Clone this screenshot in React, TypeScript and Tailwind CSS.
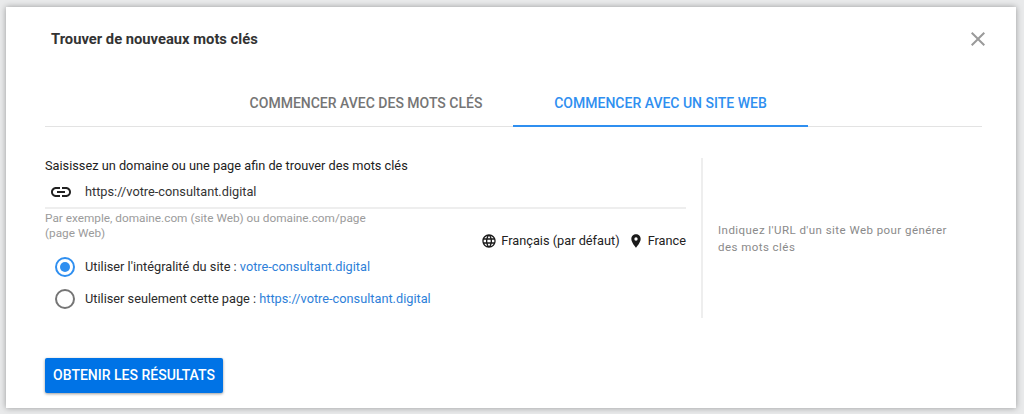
const CloseIcon = () => (
  <svg width="24" height="24" viewBox="0 0 24 24" className="text-[#9a9a9a] -mr-[10px]">
    <path d="M19 6.41 17.59 5 12 10.59 6.41 5 5 6.41 10.59 12 5 17.59 6.41 19 12 13.41 17.59 19 19 17.59 13.41 12z" fill="currentColor" />
  </svg>
);

const LinkIcon = () => (
  <svg width="24" height="24" viewBox="0 0 24 24" className="text-[#212121]">
    <path d="M3.9 12c0-1.71 1.39-3.1 3.1-3.1h4V7H7c-2.76 0-5 2.24-5 5s2.24 5 5 5h4v-1.9H7c-1.71 0-3.1-1.39-3.1-3.1zM8 13h8v-2H8v2zm9-6h-4v1.9h4c1.71 0 3.1 1.39 3.1 3.1s-1.39 3.1-3.1 3.1h-4V17h4c2.76 0 5-2.24 5-5s-2.24-5-5-5z" fill="currentColor" />
  </svg>
);

const GlobeIcon = () => (
  <svg width="16" height="16" viewBox="0 0 24 24" className="text-[#1a1a1a]">
    <path d="M11.99 2C6.47 2 2 6.48 2 12s4.47 10 9.99 10C17.52 22 22 17.52 22 12S17.52 2 11.99 2zm6.93 6h-2.95c-.32-1.25-.78-2.45-1.38-3.56 1.84.63 3.37 1.91 4.33 3.56zM12 4.04c.83 1.2 1.48 2.53 1.91 3.96h-3.82c.43-1.43 1.08-2.76 1.91-3.96zM4.26 14C4.1 13.36 4 12.69 4 12s.1-1.36.26-2h3.38c-.08.66-.14 1.32-.14 2s.06 1.34.14 2H4.26zm.82 2h2.95c.32 1.25.78 2.45 1.38 3.56-1.84-.63-3.37-1.9-4.33-3.56zm2.95-8H5.08c.96-1.66 2.49-2.93 4.33-3.56C8.81 5.55 8.35 6.75 8.03 8zM12 19.96c-.83-1.2-1.48-2.53-1.91-3.96h3.82c-.43 1.43-1.08 2.76-1.91 3.96zM14.34 14H9.66c-.09-.66-.16-1.32-.16-2s.07-1.35.16-2h4.68c.09.65.16 1.32.16 2s-.07 1.34-.16 2zm.25 5.56c.6-1.11 1.06-2.31 1.38-3.56h2.95c-.96 1.65-2.49 2.93-4.33 3.56zM16.36 14c.08-.66.14-1.32.14-2s-.06-1.34-.14-2h3.38c.16.64.26 1.31.26 2s-.1 1.36-.26 2h-3.38z" fill="currentColor" />
  </svg>
);

const PinIcon = () => (
  <svg width="16" height="16" viewBox="0 0 24 24" className="text-[#1a1a1a]">
    <path d="M12 2C8.13 2 5 5.13 5 9c0 5.25 7 13 7 13s7-7.75 7-13c0-3.87-3.13-7-7-7zm0 9.5a2.5 2.5 0 0 1 0-5 2.5 2.5 0 0 1 0 5z" fill="currentColor" />
  </svg>
);

export default function App() {
  return (
    <div className="w-[1024px] h-[414px] overflow-hidden bg-[#e9eaeb] pt-[7px] pl-[6px] font-['Roboto',sans-serif]">
      <div className="w-[1010px] h-[401px] bg-white shadow-[0_0_6px_rgba(0,0,0,0.35)] pl-[39px] pr-[34px] flex flex-col">
        <div className="flex items-center justify-between pl-[6px] pr-[2px] pt-[14px] h-[50px]">
          <h1 className="text-[14.75px] leading-[22px] font-bold text-[#333333]">Trouver de nouveaux mots clés</h1>
          <CloseIcon />
        </div>
        <div className="mt-[30px] h-[40px] border-b border-[#e3e3e3] flex pl-[168px]">
          <div className="w-[300px] h-[40px] pl-[6px] pb-[8px] flex items-center justify-center text-[14px] font-medium text-[#757575]">COMMENCER AVEC DES MOTS CLÉS</div>
          <div className="w-[295px] h-[40px] pb-[6px] flex items-center justify-center text-[14px] font-medium text-[#2f8ff0] border-b-[2px] border-[#2f8ff0]">COMMENCER AVEC UN SITE WEB</div>
        </div>
        <div className="mt-[31px] flex h-[160px]">
          <div className="w-[641px]">
            <div className="text-[12.75px] leading-[16px] text-[#212121]">Saisissez un domaine ou une page afin de trouver des mots clés</div>
            <div className="flex items-center h-[32px] mt-[3px] border-b-[2px] border-[#eeeeee] pl-[4px]">
              <LinkIcon />
              <span className="ml-[12px] text-[12.75px] text-[#333333]">https://votre-consultant.digital</span>
            </div>
            <div className="flex justify-between">
              <div className="w-[340px] mt-[2px] text-[11.8px] leading-[15px] text-[#9b9b9b]">Par exemple, domaine.com (site Web) ou domaine.com/page (page Web)</div>
              <div className="flex items-center gap-[4px] mt-[16px] h-[32px] text-[12.75px] text-[#222222]">
                <GlobeIcon />
                <span className="mr-[4px]">Français (par défaut)</span>
                <PinIcon />
                <span>France</span>
              </div>
            </div>
            <div className="pl-[10px] flex flex-col gap-[12px]">
              <div className="flex items-center gap-[10px] h-[20px] text-[12.75px] text-[#2a2a2a]">
                <span className="w-[20px] h-[20px] rounded-full border-[2px] border-[#2f8ff0] flex items-center justify-center">
                  <span className="w-[10px] h-[10px] rounded-full bg-[#2f8ff0]" />
                </span>
                <span>Utiliser l'intégralité du site : <span className="text-[#2e7fd9]">votre-consultant.digital</span></span>
              </div>
              <div className="flex items-center gap-[10px] h-[20px] text-[12.75px] text-[#2a2a2a]">
                <span className="w-[20px] h-[20px] rounded-full border-[2px] border-[#757575]" />
                <span>Utiliser seulement cette page : <span className="text-[#2e7fd9]">https://votre-consultant.digital</span></span>
              </div>
            </div>
          </div>
          <div className="ml-[15px] w-[2px] bg-[#eeeeee]" />
          <div className="ml-[15px] w-[235px] mt-[64px] text-[11.5px] leading-[17px] tracking-[0.45px] text-[#8a8a8a]">Indiquez l'URL d'un site Web pour générer des mots clés</div>
        </div>
        <button className="mt-[40px] w-[178px] h-[35px] bg-[#0073e6] rounded-[2px] shadow-[0_1px_3px_rgba(0,0,0,0.4)] text-white text-[14px] font-medium">OBTENIR LES RÉSULTATS</button>
      </div>
    </div>
  );
}
